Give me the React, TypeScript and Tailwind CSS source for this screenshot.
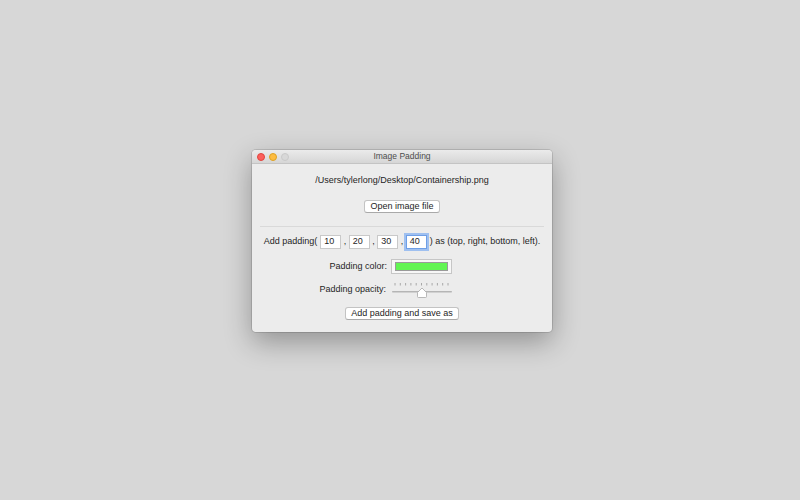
const font = { fontFamily: '"Liberation Sans", Arial, sans-serif' };

function TrafficLights() {
  return (
    <div className="flex items-center gap-[4px] pl-[5px]">
      <span className="h-[8px] w-[8px] rounded-full border border-[#e0443e] bg-[#fc605c]" />
      <span className="h-[8px] w-[8px] rounded-full border border-[#dea123] bg-[#fdbc40]" />
      <span className="h-[8px] w-[8px] rounded-full border border-[#c9c9c9] bg-[#d8d8d8]" />
    </div>
  );
}

function PushButton({ label }: { label: string }) {
  return (
    <button className="flex h-[13px] items-center rounded-[3px] border border-[#c3c3c3] border-b-[#a9a9a9] bg-white px-[5px] text-[9px] leading-none text-[#1e1e1e]">
      {label}
    </button>
  );
}

function NumberField({ value, focused }: { value: string; focused?: boolean }) {
  return (
    <div
      className={
        focused
          ? "flex h-[14px] w-[21px] items-center border border-[#6f9fe6] bg-white pl-[3px] outline outline-[2px] outline-[#9fc0f0]"
          : "flex h-[14px] w-[21px] items-center border border-[#c9c9c9] bg-white pl-[3px]"
      }
    >
      {value}
    </div>
  );
}

function TickSlider() {
  const ticks = Array.from({ length: 11 }, (_, i) => 3 + i * 5.3);
  return (
    <svg width="60" height="16" viewBox="0 0 60 16">
      {ticks.map((x) => (
        <line key={x} x1={x} x2={x} y1="1" y2="3.5" stroke="#a0a0a0" strokeWidth="0.9" />
      ))}
      <rect x="0" y="9" width="60" height="1.4" rx="0.7" fill="#b5b5b5" />
      <path
        d="M25.5 10.5 L25.5 14.5 Q25.5 15.5 26.5 15.5 L33.5 15.5 Q34.5 15.5 34.5 14.5 L34.5 10.5 L30 6 Z"
        fill="#ffffff"
        stroke="#a8a8a8"
        strokeWidth="0.8"
      />
    </svg>
  );
}

export default function App() {
  return (
    <div className="h-[500px] w-[800px] bg-[#d7d7d7] pl-[252px] pt-[150px]" style={font}>
      <div className="flex h-[182px] w-[300px] flex-col overflow-hidden rounded-[4px] bg-[#ececec] shadow-[0_0_0_1px_rgba(0,0,0,0.12),0_10px_28px_rgba(0,0,0,0.32)]">
        <div className="grid h-[14px] grid-cols-[1fr_auto_1fr] items-center border-b border-[#c4c4c4] bg-gradient-to-b from-[#ebebeb] to-[#d6d6d6]">
          <TrafficLights />
          <span className="text-[8.5px] leading-none text-[#4d4d4d]">Image Padding</span>
          <span />
        </div>

        <div className="flex flex-col items-center whitespace-nowrap pt-[10px] text-[9px] text-[#1f1f1f]">
          <div className="h-[12px] leading-[12px]">/Users/tylerlong/Desktop/Containership.png</div>

          <div className="mt-[14px]">
            <PushButton label="Open image file" />
          </div>

          <div className="mt-[13px] h-px w-[284px] bg-[#d9d9d9]" />

          <div className="mt-[8px] flex h-[14px] items-center">
            <span className="mr-[3px]">Add padding(</span>
            <NumberField value="10" />
            <span className="mx-[2.5px]">,</span>
            <NumberField value="20" />
            <span className="mx-[2.5px]">,</span>
            <NumberField value="30" />
            <span className="mx-[2.5px]">,</span>
            <NumberField value="40" focused />
            <span className="ml-[3px]">) as (top, right, bottom, left).</span>
          </div>

          <div className="mt-[10px] flex w-full items-center">
            <span className="w-[135px] text-right">Padding color:</span>
            <div className="ml-[4px] flex h-[15px] w-[61px] items-center justify-center border border-[#c6c6c6] bg-[#f7f7f7]">
              <div className="h-[9px] w-[53px] border border-[#9a9a9a] bg-[#62f553]" />
            </div>
          </div>

          <div className="mt-[8px] flex w-full items-center">
            <span className="w-[134px] text-right">Padding opacity:</span>
            <div className="ml-[6px]">
              <TickSlider />
            </div>
          </div>

          <div className="mt-[9px]">
            <PushButton label="Add padding and save as" />
          </div>
        </div>
      </div>
    </div>
  );
}
